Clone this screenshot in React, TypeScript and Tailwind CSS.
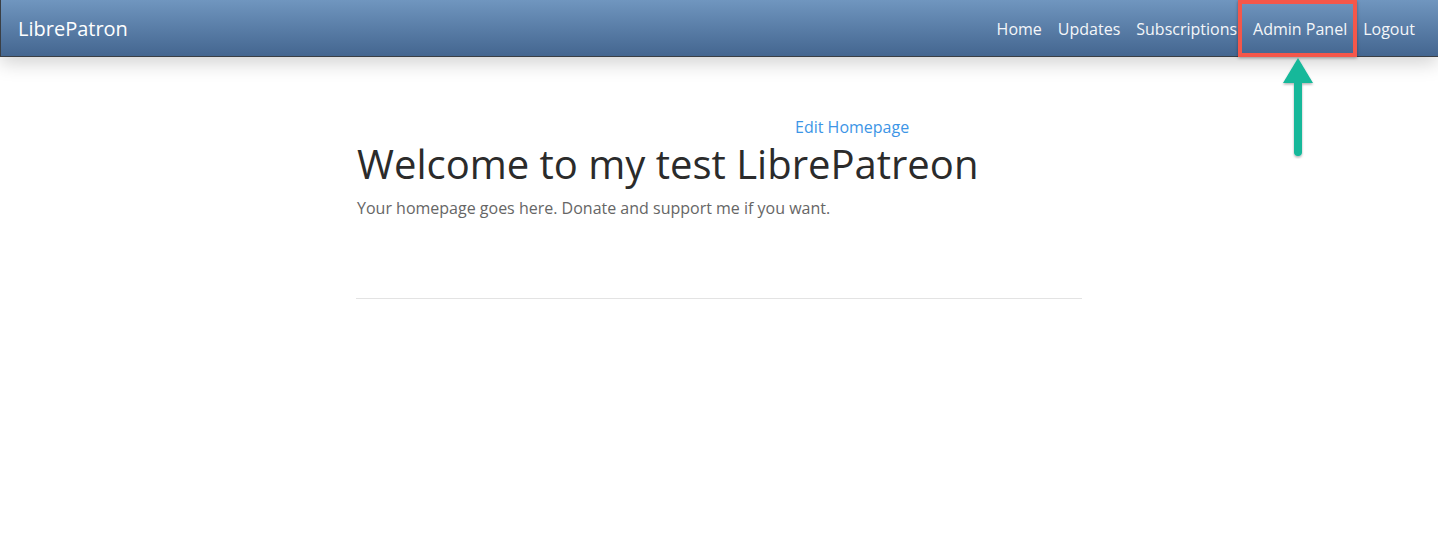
import { useState } from 'react';

const links = ['Home', 'Updates', 'Subscriptions', 'Admin Panel', 'Logout'];

export default function App() {
  const [active] = useState('Admin Panel');

  return (
    <div
      className="relative min-h-[539px] bg-white"
      style={{ fontFamily: '"Open Sans", "Liberation Sans", sans-serif' }}
    >
      {/* navbar */}
      <nav className="relative z-10 flex h-[57px] items-center justify-between border-b border-l border-[#3a3f45] bg-gradient-to-b from-[#7096bf] to-[#446690] pt-[2px] shadow-[0_6px_18px_rgba(0,0,0,0.18)]">
        <a className="pl-[17px] text-[20px] text-white">LibrePatron</a>
        <ul className="flex h-full items-center pr-[15px]">
          {links.map((link) => (
            <li key={link} className="relative flex h-full items-center">
              <a className="px-[8px] text-[16px] text-[#f4f6f9]">{link}</a>
              {link === active && (
                <span className="absolute -left-[7px] -right-[2px] -top-[2px] h-[57px] border-[4px] border-[#f4574a] shadow-[0_1px_3px_rgba(0,0,0,0.35)]" />
              )}
            </li>
          ))}
        </ul>
      </nav>

      {/* arrow annotation */}
      <svg
        className="absolute left-[1280px] top-[57px] z-20"
        width="36"
        height="102"
        viewBox="0 0 36 102"
      >
        <defs>
          <filter id="sh" x="-50%" y="-20%" width="200%" height="140%">
            <feDropShadow dx="0" dy="1.5" stdDeviation="1.2" floodColor="#000" floodOpacity="0.3" />
          </filter>
        </defs>
        <g filter="url(#sh)">
          <polygon points="18,1 33,26 3,26" fill="#13b89a" />
          <line x1="18" y1="20" x2="18" y2="95" stroke="#13b89a" strokeWidth="8" strokeLinecap="round" />
        </g>
      </svg>

      {/* content */}
      <main className="mx-auto w-[726px] pt-[58px]">
        <div className="pl-[439px] leading-[24px]">
          <a className="text-[16px] text-[#3d95e6]">Edit Homepage</a>
        </div>
        <h1 className="mt-[3px] pl-[1px] text-[40px] leading-[44px] text-[#2b2b2b]">
          Welcome to my test LibrePatreon
        </h1>
        <p className="mt-[10px] pl-[1px] text-[16px] text-[#666]">
          Your homepage goes here. Donate and support me if you want.
        </p>
        <hr className="mt-[78px] border-t border-[#e3e3e3]" />
      </main>
    </div>
  );
}
